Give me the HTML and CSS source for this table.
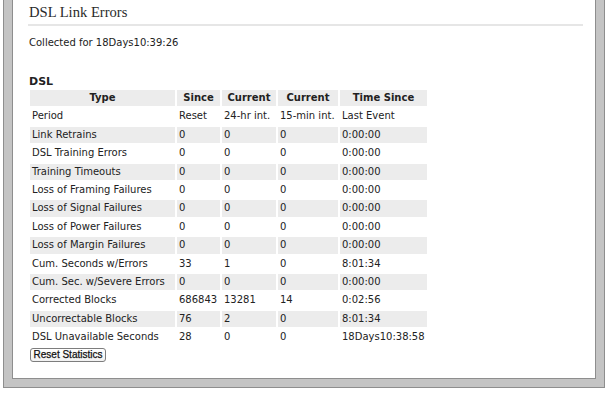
FILE: index.html
```html
<!DOCTYPE html>
<html>
<head>
<meta charset="utf-8">
<link rel="stylesheet" href="styles.css">
</head>
<body>
<div class="frame">
  <div class="panel">
    <h2 class="title">DSL Link Errors</h2>
    <p class="collected">Collected for 18Days10:39:26</p>
    <h3 class="section">DSL</h3>
    <table class="stats">
      <thead>
        <tr>
          <th class="c-type">Type</th>
          <th class="c-since">Since</th>
          <th class="c-cur">Current</th>
          <th class="c-cur2">Current</th>
          <th class="c-time">Time Since</th>
        </tr>
      </thead>
      <tbody>
        <tr><td>Period</td><td>Reset</td><td>24-hr int.</td><td>15-min int.</td><td>Last Event</td></tr>
        <tr><td>Link Retrains</td><td>0</td><td>0</td><td>0</td><td>0:00:00</td></tr>
        <tr><td>DSL Training Errors</td><td>0</td><td>0</td><td>0</td><td>0:00:00</td></tr>
        <tr><td>Training Timeouts</td><td>0</td><td>0</td><td>0</td><td>0:00:00</td></tr>
        <tr><td>Loss of Framing Failures</td><td>0</td><td>0</td><td>0</td><td>0:00:00</td></tr>
        <tr><td>Loss of Signal Failures</td><td>0</td><td>0</td><td>0</td><td>0:00:00</td></tr>
        <tr><td>Loss of Power Failures</td><td>0</td><td>0</td><td>0</td><td>0:00:00</td></tr>
        <tr><td>Loss of Margin Failures</td><td>0</td><td>0</td><td>0</td><td>0:00:00</td></tr>
        <tr><td>Cum. Seconds w/Errors</td><td>33</td><td>1</td><td>0</td><td>8:01:34</td></tr>
        <tr><td>Cum. Sec. w/Severe Errors</td><td>0</td><td>0</td><td>0</td><td>0:00:00</td></tr>
        <tr><td>Corrected Blocks</td><td>686843</td><td>13281</td><td>14</td><td>0:02:56</td></tr>
        <tr><td>Uncorrectable Blocks</td><td>76</td><td>2</td><td>0</td><td>8:01:34</td></tr>
        <tr><td>DSL Unavailable Seconds</td><td>28</td><td>0</td><td>0</td><td>18Days10:38:58</td></tr>
      </tbody>
    </table>
    <button class="reset" type="button">Reset Statistics</button>
  </div>
</div>
</body>
</html>
```
FILE: styles.css
```css
html, body {
  margin: 0;
  padding: 0;
  background: #ffffff;
}

.frame {
  margin-left: 3px;
  width: 602px;
  box-sizing: border-box;
  border: 1px solid #8e8e8e;
  border-top: none;
  background: #c4c4c4;
  padding: 0 8px 8px 8px;
}

.panel {
  background: #ffffff;
  border: 1px solid #8e8e8e;
  border-top: none;
  padding: 0 0 16px 15px;
  font-family: "DejaVu Sans", Verdana, sans-serif;
  color: #222222;
}

.title {
  margin: 0 12px 0 0;
  padding: 3px 0 3px 1px;
  font-family: "Liberation Serif", "Times New Roman", serif;
  font-weight: normal;
  font-size: 14.6px;
  line-height: 18px;
  color: #2a2a2a;
  border-bottom: 2px solid #e6e6e6;
}

.collected {
  margin: 10px 0 0 1px;
  font-size: 10px;
  line-height: 14px;
}

.section {
  margin: 26px 0 0 1px;
  font-size: 11px;
  line-height: 12px;
  font-weight: bold;
}

.stats {
  border-collapse: separate;
  border-spacing: 2px;
  table-layout: fixed;
  font-size: 10px;
  line-height: 14.4px;
  margin: 0;
}

.stats th,
.stats td {
  padding: 1px 2px;
  white-space: nowrap;
  text-align: left;
  overflow: hidden;
}

.stats th {
  font-weight: bold;
  text-align: center;
  background: #ececec;
}

.stats tbody tr:nth-child(even) td {
  background: #ececec;
}

.c-type { width: 141px; }
.c-since { width: 39px; }
.c-cur { width: 50px; }
.c-cur2 { width: 56px; }
.c-time { width: 83px; }

.reset {
  display: block;
  margin: 0 0 0 2px;
  height: 14px;
  width: 76px;
  padding: 0;
  box-sizing: border-box;
  border: 1px solid #7d7d7d;
  border-radius: 3px;
  background: linear-gradient(#ffffff, #f1f1f1);
  font-family: "Liberation Sans", Arial, sans-serif;
  font-size: 10px;
  line-height: 12px;
  color: #111;
  -webkit-text-stroke: 0.25px #111;
}
```
